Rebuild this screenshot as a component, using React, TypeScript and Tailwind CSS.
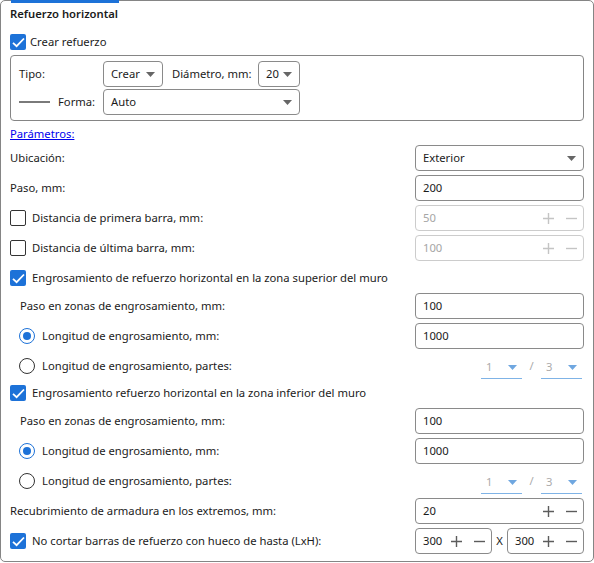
import React from 'react';

const font = "font-['Segoe_UI','Noto_Sans',sans-serif]";

function Arrow({ color = '#666666' }: { color?: string }) {
  return (
    <svg width="9" height="5" viewBox="0 0 9 5" className="shrink-0">
      <path d="M0 0 H9 L4.5 5 Z" fill={color} />
    </svg>
  );
}

function PlusMinus({ disabled = false }: { disabled?: boolean }) {
  const c = disabled ? '#c4c4c4' : '#5c5c5c';
  return (
    <div className="flex items-center gap-[12px] shrink-0">
      <svg width="11" height="11" viewBox="0 0 11 11">
        <path d="M0 5.5 H11 M5.5 0 V11" stroke={c} strokeWidth="1.4" />
      </svg>
      <svg width="11" height="11" viewBox="0 0 11 11">
        <path d="M0 5.5 H11" stroke={c} strokeWidth="1.4" />
      </svg>
    </div>
  );
}

function CheckBox({ checked }: { checked: boolean }) {
  if (checked) {
    return (
      <div className="w-[16px] h-[16px] rounded-[2px] bg-[#1d72d8] flex items-center justify-center shrink-0">
        <svg width="13" height="11" viewBox="0 0 13 11">
          <path d="M1 5.8 L4.6 9.2 L12 1.5" stroke="white" strokeWidth="1.8" fill="none" />
        </svg>
      </div>
    );
  }
  return <div className="w-[16px] h-[16px] rounded-[2px] border border-[#333333] bg-white shrink-0" />;
}

function Radio({ checked }: { checked: boolean }) {
  return (
    <div
      className={
        checked
          ? 'w-[16px] h-[16px] rounded-full border border-[#1d72d8] flex items-center justify-center shrink-0'
          : 'w-[16px] h-[16px] rounded-full border border-[#333333] shrink-0'
      }
    >
      {checked && <div className="w-[8px] h-[8px] rounded-full bg-[#1d72d8]" />}
    </div>
  );
}

function Select({ value, width }: { value: string; width: string }) {
  return (
    <div className={`${width} h-[26px] border border-[#8a8a8a] rounded-[4px] flex items-center justify-between pl-[7px] pr-[7px] bg-white`}>
      <span>{value}</span>
      <Arrow />
    </div>
  );
}

function Input({ value, stepper = false, disabled = false, width = 'w-[169px]' }: { value: string; stepper?: boolean; disabled?: boolean; width?: string }) {
  return (
    <div
      className={
        (disabled ? 'border-[#cccccc] text-[#a6a6a6] ' : 'border-[#8a8a8a] ') +
        `${width} h-[26px] border rounded-[4px] flex items-center justify-between pl-[7px] pr-[6px] bg-white`
      }
    >
      <span>{value}</span>
      {stepper && <PlusMinus disabled={disabled} />}
    </div>
  );
}

function Underline({ value }: { value: string }) {
  return (
    <div className="w-[41px] h-[22px] mt-[4px] border-b border-[#7fb3e6] flex items-center justify-between pl-[5px] pr-[5px] text-[#ababab]">
      <span>{value}</span>
      <Arrow color="#6fa7e0" />
    </div>
  );
}

function Row({ label, children, className = '' }: { label: React.ReactNode; children?: React.ReactNode; className?: string }) {
  return (
    <div className={`h-[26px] flex items-center justify-between ${className}`}>
      <div className="flex items-center">{label}</div>
      {children}
    </div>
  );
}

function ThickeningBlock({ title, top }: { title: string; top: string }) {
  return (
    <>
      <Row className={top} label={<><CheckBox checked /><span className="ml-[6px]">{title}</span></>} />
      <Row className="mt-[2px]" label={<span className="ml-[10px]">Paso en zonas de engrosamiento, mm:</span>}>
        <Input value="100" />
      </Row>
      <Row className="mt-[4px]" label={<><span className="ml-[9px]"><Radio checked /></span><span className="ml-[7px]">Longitud de engrosamiento, mm:</span></>}>
        <Input value="1000" />
      </Row>
      <Row className="mt-[4px]" label={<><span className="ml-[9px]"><Radio checked={false} /></span><span className="ml-[7px]">Longitud de engrosamiento, partes:</span></>}>
        <div className="flex items-center pr-[2px] h-[26px]">
          <Underline value="1" />
          <span className="w-[19px] text-center text-[#ababab]">/</span>
          <Underline value="3" />
        </div>
      </Row>
    </>
  );
}

export default function App() {
  return (
    <div className={`${font} text-[11.25px] text-[#1b1b1b] bg-white w-[594px] h-[563px]`}>
      <div className="relative w-[594px] h-[562px] border border-[#858585] rounded-[5px] px-[9px] flex flex-col">
        <div className="absolute left-[10px] top-[-1px] w-[108px] h-[3px] bg-[#1d72d8]" />
        <div className="h-[26px] flex items-center font-semibold">Refuerzo horizontal</div>

        <div className="mt-[7px] h-[16px] flex items-center">
          <CheckBox checked />
          <span className="ml-[4px]">Crear refuerzo</span>
        </div>

        <div className="mt-[5px] h-[66px] border border-[#858585] rounded-[4px] pl-[8px] pt-[5px] flex flex-col gap-[2px]">
          <div className="h-[26px] flex items-center">
            <span className="w-[84px]">Tipo:</span>
            <Select value="Crear" width="w-[60px]" />
            <span className="ml-[9px] w-[86px]">Diámetro, mm:</span>
            <Select value="20" width="w-[42px]" />
          </div>
          <div className="h-[26px] flex items-center">
            <div className="w-[31px] h-[2px] bg-[#7a7a7a]" />
            <span className="ml-[8px] w-[45px]">Forma:</span>
            <Select value="Auto" width="w-[197px]" />
          </div>
        </div>

        <div className="mt-[5px] h-[16px] flex items-center">
          <span className="text-[#0000ee] underline">Parámetros:</span>
        </div>

        <Row className="mt-[3px]" label="Ubicación:">
          <Select value="Exterior" width="w-[169px]" />
        </Row>
        <Row className="mt-[4px]" label="Paso, mm:">
          <Input value="200" />
        </Row>
        <Row className="mt-[4px]" label={<><CheckBox checked={false} /><span className="ml-[6px]">Distancia de primera barra, mm:</span></>}>
          <Input value="50" stepper disabled />
        </Row>
        <Row className="mt-[4px]" label={<><CheckBox checked={false} /><span className="ml-[6px]">Distancia de última barra, mm:</span></>}>
          <Input value="100" stepper disabled />
        </Row>

        <ThickeningBlock top="mt-[4px]" title="Engrosamiento de refuerzo horizontal en la zona superior del muro" />
        <ThickeningBlock top="mt-[1px]" title="Engrosamiento refuerzo horizontal en la zona inferior del muro" />

        <Row className="mt-[4px]" label="Recubrimiento de armadura en los extremos, mm:">
          <Input value="20" stepper />
        </Row>
        <Row className="mt-[4px]" label={<><CheckBox checked /><span className="ml-[6px]">No cortar barras de refuerzo con hueco de hasta (LxH):</span></>}>
          <div className="flex items-center">
            <Input value="300" stepper width="w-[77px]" />
            <span className="w-[15px] text-center">X</span>
            <Input value="300" stepper width="w-[77px]" />
          </div>
        </Row>
      </div>
    </div>
  );
}
